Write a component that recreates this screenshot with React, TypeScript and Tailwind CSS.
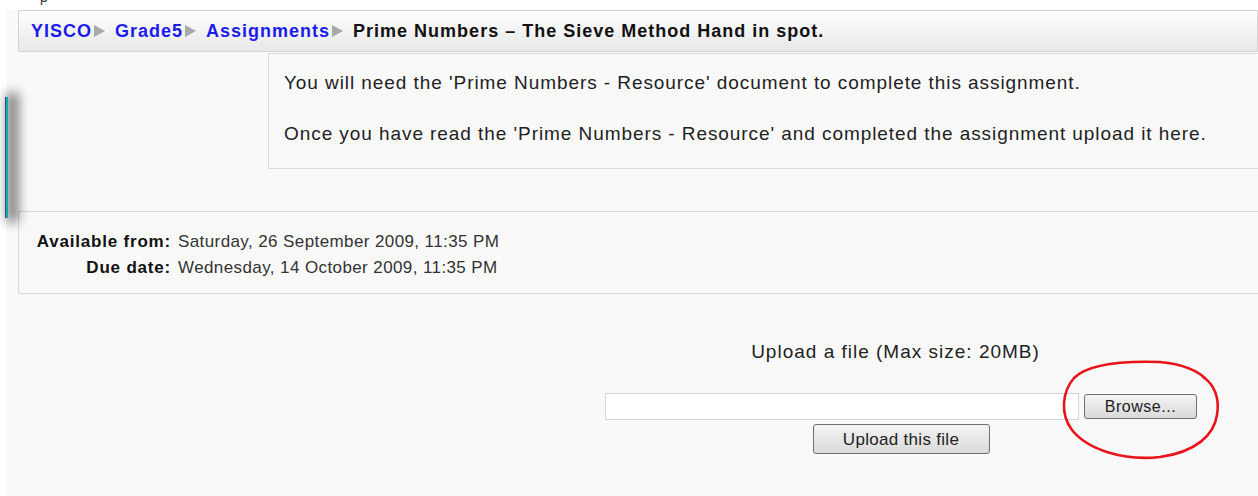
import React from "react";

const font = { fontFamily: '"Liberation Sans", Arial, sans-serif' };

function Sep() {
  return (
    <svg className="ml-[2px] mr-[10px] shrink-0" width="11" height="12" viewBox="0 0 11 12">
      <path d="M0 0 L11 6 L0 12 Z" fill="#a9a9a9" />
    </svg>
  );
}

export default function App() {
  return (
    <div className="w-[1258px] h-[496px] bg-white relative overflow-hidden" style={font}>
      <div className="absolute left-[40px] top-[-11px] text-[14px] leading-[16px] text-[#333]">p</div>
      <div className="ml-[6px] mt-[10px] h-[486px] bg-[#f9f9f9] flex flex-col">
        {/* navigation trail */}
        <div className="ml-[12px] h-[42px] border border-[#d4d4d4] bg-gradient-to-b from-[#fefefe] to-[#e8e8e8] flex items-center pl-[12px] text-[18px] tracking-[1px] font-bold">
          <a className="text-[#1b1bf0]">YISCO</a>
          <Sep />
          <a className="text-[#1b1bf0]">Grade5</a>
          <Sep />
          <a className="text-[#1b1bf0]">Assignments</a>
          <Sep />
          <span className="text-[#111]">Prime Numbers – The Sieve Method Hand in spot.</span>
        </div>

        {/* assignment intro */}
        <div className="ml-[262px] mt-[1px] w-[1000px] h-[116px] border border-[#dadada] bg-[#f9f9f9] pl-[15px] pt-[18px] text-[19px] tracking-[0.93px] text-[#222] flex flex-col gap-[29px]">
          <p className="leading-[22px]">You will need the 'Prime Numbers - Resource' document to complete this assignment.</p>
          <p className="leading-[22px]">Once you have read the 'Prime Numbers - Resource' and completed the assignment upload it here.</p>
        </div>

        {/* dates */}
        <div className="ml-[12px] mt-[42px] w-[1250px] h-[83px] border border-[#dadada] flex flex-col justify-center gap-[6px] text-[17px] tracking-[0.4px] leading-[20px] pt-[5px]">
          <div className="flex">
            <span className="w-[152px] text-right font-bold tracking-[0.8px] text-[#111]">Available from:</span>
            <span className="ml-[7px] text-[#333]">Saturday, 26 September 2009, 11:35 PM</span>
          </div>
          <div className="flex">
            <span className="w-[152px] text-right font-bold tracking-[0.8px] text-[#111]">Due date:</span>
            <span className="ml-[7px] text-[#333]">Wednesday, 14 October 2009, 11:35 PM</span>
          </div>
        </div>

        {/* upload form */}
        <div className="ml-[598px] w-[594px] flex flex-col items-center mt-[47px]">
          <div className="text-[19px] tracking-[1px] text-[#222] leading-[22px] -ml-[11px]">Upload a file (Max size: 20MB)</div>
          <div className="mt-[30px] flex items-center gap-[5px]">
            <div className="w-[474px] h-[27px] bg-white border border-[#cfd6e0]" />
            <button className="w-[113px] h-[25px] rounded-[3px] border border-[#707070] bg-gradient-to-b from-[#f4f4f4] to-[#dadada] text-[16px] tracking-[0.55px] text-[#222] leading-none">
              Browse...
            </button>
          </div>
          <button className="mt-[4px] w-[177px] h-[30px] rounded-[3px] border border-[#707070] bg-gradient-to-b from-[#f4f4f4] to-[#dadada] text-[17px] tracking-[0.3px] text-[#222] leading-none">
            Upload this file
          </button>
        </div>
      </div>

      {/* window edge with shadow on the left */}
      <div className="absolute left-[5px] top-[97px] w-[3px] h-[121px] bg-[#16a6bc] border-l border-[#2b5a62] shadow-[6px_0_12px_4px_rgba(0,0,0,0.55)]" />

      {/* red pen mark around the browse button */}
      <svg className="absolute left-0 top-0 pointer-events-none" width="1258" height="496">
        <path
          d="M1203 377 C1214 384 1220 398 1217 415 C1214 435 1196 452 1160 457 C1124 461 1088 450 1072 430 C1060 414 1062 392 1074 378 C1090 362 1130 361 1160 362 C1182 364 1198 370 1208 381"
          fill="none"
          stroke="#e8141a"
          strokeWidth="2.6"
          strokeLinecap="round"
        />
      </svg>
    </div>
  );
}
